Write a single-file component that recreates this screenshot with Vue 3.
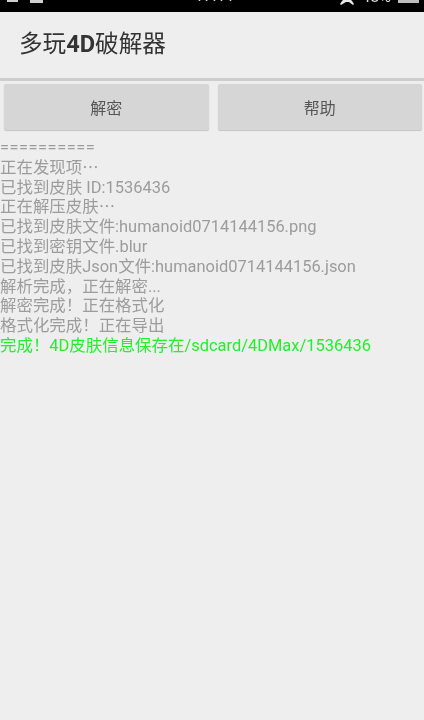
<script setup>
const lines = [
  '==========',
  '正在发现项⋯',
  '已找到皮肤 ID:1536436',
  '正在解压皮肤⋯',
  '已找到皮肤文件:humanoid0714144156.png',
  '已找到密钥文件.blur',
  '已找到皮肤Json文件:humanoid0714144156.json',
  '解析完成\uFF0C正在解密...',
  '解密完成\uFF01正在格式化',
  '格式化完成\uFF01正在导出',
]
const done = '完成\uFF014D皮肤信息保存在/sdcard/4DMax/1536436'
</script>

<template>
  <div class="screen">
    <div class="status">
      <div class="status-left">
        <span class="sig"></span>
        <span class="sig small"></span>
      </div>
      <span class="time">17:11</span>
      <div class="status-right">
        <svg class="pin" width="14" height="5" viewBox="0 0 14 5"><path d="M3 0h8l1 1 2 3-1 1-4-3H6L1 5 0 4l2-3z" fill="#e8e8e8" /></svg>
        <span class="pct">48%</span>
        <span class="batt"></span>
      </div>
    </div>
    <header class="bar">
      <h1 class="title">多玩<b>4D</b>破解器</h1>
    </header>
    <div class="rule"></div>
    <div class="actions">
      <button class="btn">解密</button>
      <button class="btn">帮助</button>
    </div>
    <div class="log">
      <div v-for="(l, i) in lines" :key="i" class="line" :class="{ sep: i === 0 }">{{ l }}</div>
      <div class="line done">{{ done }}</div>
    </div>
  </div>
</template>

<style>
html, body { margin: 0; background: #eeeeee; }
</style>

<style scoped>
.screen {
  width: 424px;
  height: 720px;
  overflow: hidden;
  background: #eeeeee;
  font-family: "Roboto", "Noto Sans CJK SC", sans-serif;
  display: flex;
  flex-direction: column;
}
.status {
  height: 12px;
  flex: none;
  background: #000;
  display: grid;
  grid-template-columns: 1fr auto 1fr;
  overflow: hidden;
  padding: 0 5px 0 7px;
  box-sizing: border-box;
}
.status-left { display: flex; gap: 12px; align-items: flex-start; }
.sig { display: block; width: 11px; height: 2px; background: #cfcfcf; }
.sig.small { width: 13px; height: 3px; }
.time {
  color: #dcdcdc;
  font-size: 16px;
  line-height: 12px;
  height: 12px;
  margin-top: -10px;
  margin-left: 3px;
  filter: blur(0.3px);
}
.status-right { display: flex; align-items: flex-start; justify-content: flex-end; gap: 7px; }
.pct { color: #dcdcdc; font-size: 16px; line-height: 12px; margin-top: -9px; filter: blur(0.3px); }
.batt { width: 21px; height: 3px; background: #bdbdbd; }
.bar {
  height: 66px;
  flex: none;
  display: flex;
  align-items: center;
  padding: 0 0 6px 19px;
  box-sizing: border-box;
  background: #eeeeee;
}
.title {
  margin: 0;
  font-size: 23.6px;
  font-weight: 400;
  color: #333333;
  filter: blur(0.35px);
}
.title b { font-weight: 700; }
.rule { height: 3px; flex: none; background: #cdcdcd; }
.actions {
  display: flex;
  gap: 9px;
  padding: 3px 2px 0 4px;
  flex: none;
}
.btn {
  flex: 1;
  height: 46px;
  border: 0;
  border-radius: 2px;
  background: #d6d6d6;
  box-shadow: 0 1px 1px #c4c4c4;
  color: #555555;
  font-family: inherit;
  font-size: 16px;
  padding: 0;
  filter: blur(0.3px);
}
.log {
  padding-top: 8px;
  font-size: 16.45px;
  line-height: 19.8px;
  color: #9c9c9c;
  filter: blur(0.35px);
}
.line { white-space: nowrap; }
.sep { letter-spacing: 0.5px; }
.done { color: #22f02c; }
</style>
